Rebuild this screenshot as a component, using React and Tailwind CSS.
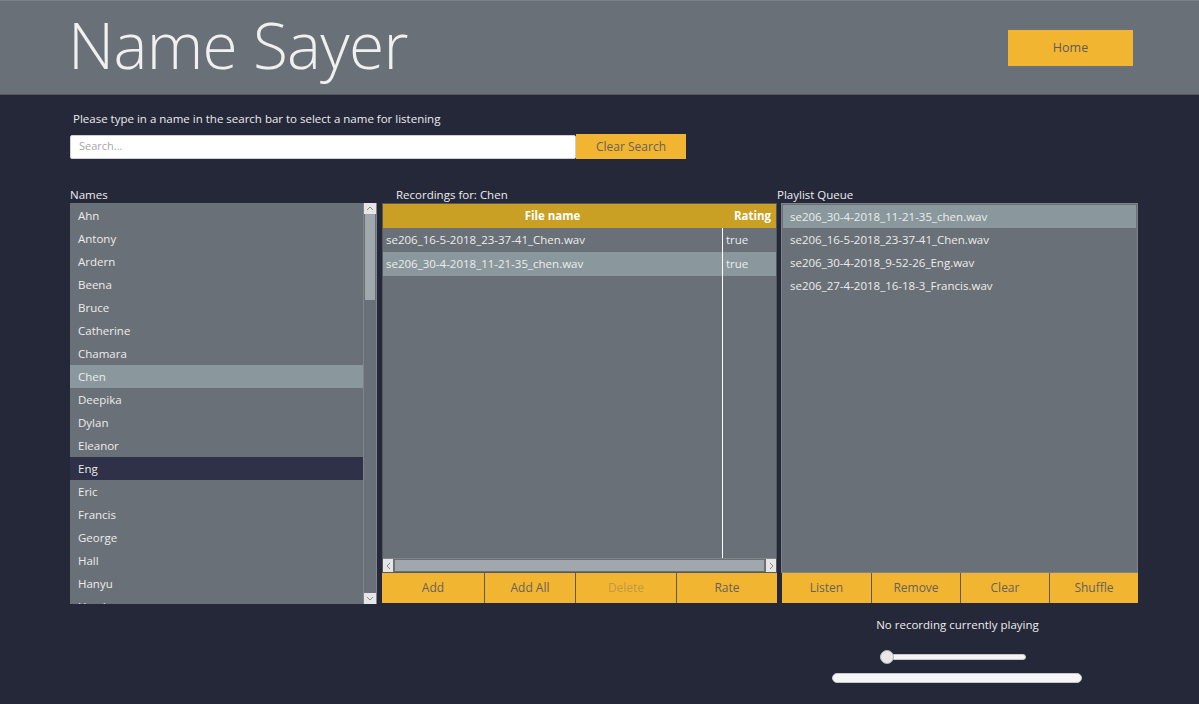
import React from 'react';

const names = [
    'Ahn', 'Antony', 'Ardern', 'Beena', 'Bruce', 'Catherine', 'Chamara', 'Chen',
    'Deepika', 'Dylan', 'Eleanor', 'Eng', 'Eric', 'Francis', 'George', 'Hall', 'Hanyu', 'Hayden',
];

const recordings = [
    { file: 'se206_16-5-2018_23-37-41_Chen.wav', rating: 'true' },
    { file: 'se206_30-4-2018_11-21-35_chen.wav', rating: 'true' },
];

const queue = [
    'se206_30-4-2018_11-21-35_chen.wav',
    'se206_16-5-2018_23-37-41_Chen.wav',
    'se206_30-4-2018_9-52-26_Eng.wav',
    'se206_27-4-2018_16-18-3_Francis.wav',
];

const ActionBar = ({ items }) => (
    <div className="flex h-[30px] bg-[#f2b531]">
        {items.map((item, i) => (
            <button
                key={item.label}
                className={`${item.w} shrink-0 text-[12px] ${i > 0 ? 'border-l border-[#5f5a52]' : ''} ${item.disabled ? 'text-[#c29a45]' : 'text-[#66625a]'}`}
            >
                {item.label}
            </button>
        ))}
    </div>
);

const App = () => {
    return (
        <div className="w-[1199px] h-[704px] bg-[#252839] overflow-hidden font-['Open_Sans',sans-serif] text-[11.5px] text-[#ececec]">
            <div className="h-[95px] bg-[#6a7077] border-t border-[#7a8086] border-b border-b-[#56585c] flex justify-between pl-[68px] pr-[66px]">
                <h1 className="pt-[12px] text-[64px] leading-[64px] font-light text-[#f0f0f0] tracking-[-0.7px]">Name Sayer</h1>
                <button className="mt-[29px] w-[125px] h-[36px] bg-[#f2b531] text-[12.5px] text-[#5e5b58]">Home</button>
            </div>

            <div className="pl-[70px]">
                <p className="mt-[16px] ml-[3px] leading-[16px]">Please type in a name in the search bar to select a name for listening</p>
                <div className="mt-[7px] flex items-center">
                    <div className="w-[506px] h-[24px] bg-white rounded-[2px] border border-[#d0d0d0] flex items-center px-[8px] text-[#a8a8a8] text-[11px]">
                        Search...
                    </div>
                    <button className="w-[110px] h-[25px] bg-[#f2b531] text-[#66625a] text-[12px]">Clear Search</button>
                </div>

                <div className="mt-[28px] flex">
                    {/* Names */}
                    <div className="w-[307px]">
                        <div className="leading-[16px]">Names</div>
                        <div className="flex h-[401px] bg-[#6a7077]">
                            <div className="flex-1 overflow-hidden pt-[1px]">
                                {names.map((n) => (
                                    <div
                                        key={n}
                                        className={`h-[23px] flex items-center pl-[8px] ${n === 'Chen' ? 'bg-[#8a989e]' : n === 'Eng' ? 'bg-[#2e3148]' : ''}`}
                                    >
                                        {n}
                                    </div>
                                ))}
                            </div>
                            <div className="w-[14px] flex flex-col border-x border-[#808589] bg-[#6a7077]">
                                <div className="h-[11px] bg-[#e6e6e6] flex items-center justify-center">
                                    <svg width="8" height="5" viewBox="0 0 8 5"><path d="M1 4 L4 1 L7 4" stroke="#888" fill="none" /></svg>
                                </div>
                                <div className="mx-[1px] h-[86px] bg-[#a0a8ad]" />
                                <div className="flex-1" />
                                <div className="h-[11px] bg-[#e6e6e6] flex items-center justify-center">
                                    <svg width="8" height="5" viewBox="0 0 8 5"><path d="M1 1 L4 4 L7 1" stroke="#888" fill="none" /></svg>
                                </div>
                            </div>
                        </div>
                    </div>

                    {/* Recordings */}
                    <div className="w-[395px] ml-[5px]">
                        <div className="leading-[16px] pl-[14px]">Recordings for: Chen</div>
                        <div className="h-[370px] bg-[#6a7077] border border-[#55595e] flex flex-col">
                            <div className="flex h-[24px] bg-[#c9a024] font-bold text-white">
                                <div className="w-[339px] flex items-center justify-center">File name</div>
                                <div className="flex-1 flex items-center justify-end pr-[5px]">Rating</div>
                            </div>
                            <div className="flex-1 relative">
                                {recordings.map((r, i) => (
                                    <div key={r.file} className={`flex h-[24px] items-center ${i === 1 ? 'bg-[#8a989e]' : ''}`}>
                                        <div className="w-[339px] pl-[3px]">{r.file}</div>
                                        <div className="pl-[4px]">{r.rating}</div>
                                    </div>
                                ))}
                                <div className="absolute left-[339px] top-0 bottom-0 w-px bg-white" />
                            </div>
                            <div className="h-[14px] flex items-center bg-[#6a7077] border-t border-[#808589]">
                                <div className="w-[10px] h-[13px] bg-[#e6e6e6] flex items-center justify-center">
                                    <svg width="5" height="8" viewBox="0 0 5 8"><path d="M4 1 L1 4 L4 7" stroke="#888" fill="none" /></svg>
                                </div>
                                <div className="flex-1 mx-[2px] h-[11px] bg-[#a0a8ad]" />
                                <div className="w-[10px] h-[13px] bg-[#e6e6e6] flex items-center justify-center">
                                    <svg width="5" height="8" viewBox="0 0 5 8"><path d="M1 1 L4 4 L1 7" stroke="#888" fill="none" /></svg>
                                </div>
                            </div>
                        </div>
                        <ActionBar
                            items={[
                                { label: 'Add', w: 'w-[102px]' },
                                { label: 'Add All', w: 'w-[91px]' },
                                { label: 'Delete', w: 'w-[101px]', disabled: true },
                                { label: 'Rate', w: 'w-[101px]' },
                            ]}
                        />
                    </div>

                    {/* Playlist */}
                    <div className="w-[361px]">
                        <div className="leading-[16px]">Playlist Queue</div>
                        <div className="ml-[4px] w-[357px]">
                            <div className="h-[370px] bg-[#6a7077] border border-[#7d8388] p-[1px]">
                                {queue.map((q, i) => (
                                    <div key={q} className={`h-[23px] flex items-center pl-[7px] ${i === 0 ? 'bg-[#8a989e]' : ''}`}>
                                        {q}
                                    </div>
                                ))}
                            </div>
                            <div className="pl-[1px]">
                                <ActionBar
                                    items={[
                                        { label: 'Listen', w: 'w-[89px]' },
                                        { label: 'Remove', w: 'w-[89px]' },
                                        { label: 'Clear', w: 'w-[89px]' },
                                        { label: 'Shuffle', w: 'w-[89px]' },
                                    ]}
                                />
                            </div>
                            <div className="mt-[14px] text-center leading-[16px] pr-[4px]">No recording currently playing</div>
                            <div className="mt-[17px] pl-[99px]">
                                <div className="w-[146px] h-[14px] relative flex items-center">
                                    <div className="w-full h-[6px] rounded-full bg-[#f4f4f4] border border-[#c8c8c8]" />
                                    <div className="absolute left-0 top-0 w-[14px] h-[14px] rounded-full bg-[#e8e8e8] border border-[#b4b4b4]" />
                                </div>
                            </div>
                            <div className="mt-[9px] pl-[51px]">
                                <div className="w-[250px] h-[10px] rounded-full bg-[#f6f6f6] border border-[#c8c8c8]" />
                            </div>
                        </div>
                    </div>
                </div>
            </div>
        </div>
    );
};

export default App;
